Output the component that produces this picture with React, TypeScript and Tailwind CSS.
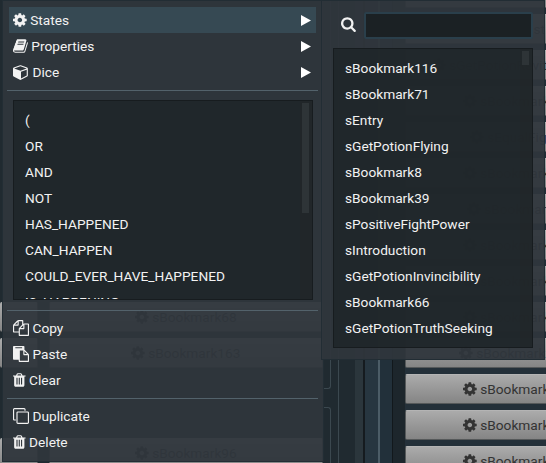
import type { ReactNode } from "react";

type IconName = "cog" | "book" | "cube" | "search" | "copy" | "paste" | "trash" | "clone";

const ICONS: Record<IconName, { x: number; w: number; d: string }> = {
  cog: {
    x: 128,
    w: 1536,
    d: "M1152 896q0-106-75-181t-181-75-181 75-75 181 75 181 181 75 181-75 75-181zm512-109v222q0 12-8 23t-20 13l-185 28q-19 54-39 91 35 50 107 138 10 12 10 25t-9 23q-27 37-99 108t-94 71q-12 0-26-9l-138-108q-44 23-91 38-16 136-29 186-7 28-36 28h-222q-14 0-24.5-8.5t-11.5-21.5l-28-184q-49-16-90-37l-141 107q-10 9-25 9-14 0-25-11-126-114-165-168-7-10-7-23 0-12 8-23 15-21 51-66.5t54-70.5q-27-50-41-99l-183-27q-13-2-21-12.5t-8-23.5v-222q0-12 8-23t19-13l186-28q14-46 39-92-40-57-107-138-10-12-10-24 0-10 9-23 26-36 98.5-107.5t94.5-71.5q13 0 26 10l138 107q44-23 91-38 16-136 29-186 7-28 36-28h222q14 0 24.5 8.5t11.5 21.5l28 184q49 16 90 37l142-107q9-9 24-9 13 0 25 10 129 119 165 170 7 8 7 22 0 12-8 23-15 21-51 66.5t-54 70.5q26 50 41 98l183 28q13 2 21 12.5t8 23.5z",
  },
  book: {
    x: 64,
    w: 1664,
    d: "M1703 478q40 57 18 129l-275 906q-19 64-76.5 107.5t-122.5 43.5h-923q-77 0-148.5-53.5t-99.5-131.5q-24-67-2-127 0-4 3-27t4-37q1-8-3-21.5t-3-19.5q2-11 8-21t16.5-23.5 16.5-23.5q23-38 45-91.5t30-91.5q3-10 .5-30t-.5-28q3-11 17-28t17-23q21-36 42-92t25-90q1-9-2.5-32t.5-28q4-13 22-30.5t22-22.5q19-26 42.5-84.5t27.5-96.5q1-8-3-25.5t-2-26.5q2-8 9-18t18-23 17-21q8-12 16.5-30.5t15-35 16-36 19.5-32 26.5-23.5 36-11.5 47.5 5.5l-1 3q38-9 51-9h761q74 0 114 56t18 130l-274 906q-36 119-71.5 153.5t-128.5 34.5h-869q-27 0-38 15-11 16-1 43 24 70 144 70h923q29 0 56-15.5t35-41.5l300-987q7-22 5-57 38 15 59 43zm-1064 2q-4 13 2 22.5t20 9.5h608q13 0 25.5-9.5t16.5-22.5l21-64q4-13-2-22.5t-20-9.5h-608q-13 0-25.5 9.5t-16.5 22.5zm-83 256q-4 13 2 22.5t20 9.5h608q13 0 25.5-9.5t16.5-22.5l21-64q4-13-2-22.5t-20-9.5h-608q-13 0-25.5 9.5t-16.5 22.5z",
  },
  cube: {
    x: 0,
    w: 1792,
    d: "M896 1629l640-349v-636l-640 233v752zm-64-865l698-254-698-254-698 254zm832-252v768q0 35-18 65t-49 47l-704 384q-28 16-61 16t-61-16l-704-384q-31-17-49-47t-18-65v-768q0-40 23-73t61-47l704-256q22-8 44-8t44 8l704 256q38 14 61 47t23 73z",
  },
  search: {
    x: 64,
    w: 1664,
    d: "M1216 832q0-185-131.5-316.5t-316.5-131.5-316.5 131.5-131.5 316.5 131.5 316.5 316.5 131.5 316.5-131.5 131.5-316.5zm512 832q0 52-38 90t-90 38q-54 0-90-38l-343-342q-179 124-399 124-143 0-273.5-55.5t-225-150-150-225-55.5-273.5 55.5-273.5 150-225 225-150 273.5-55.5 273.5 55.5 225 150 150 225 55.5 273.5q0 220-124 399l343 343q37 37 37 90z",
  },
  copy: {
    x: 0,
    w: 1792,
    d: "M1696 384q40 0 68 28t28 68v1216q0 40-28 68t-68 28h-960q-40 0-68-28t-28-68v-288h-544q-40 0-68-28t-28-68v-672q0-40 20-88t48-76l408-408q28-28 76-48t88-20h416q40 0 68 28t28 68v328q68-40 128-40h416zm-544 213l-299 299h299v-299zm-640-384l-299 299h299v-299zm196 647l316-316v-416h-384v416q0 40-28 68t-68 28h-416v640h512v-256q0-40 20-88t48-76zm956 804v-1152h-384v416q0 40-28 68t-68 28h-416v640h896z",
  },
  paste: {
    x: 0,
    w: 1792,
    d: "M768 1664h896v-640h-416q-40 0-68-28t-28-68v-416h-384v1152zm256-1440v-64q0-13-9.5-22.5t-22.5-9.5h-704q-13 0-22.5 9.5t-9.5 22.5v64q0 13 9.5 22.5t22.5 9.5h704q13 0 22.5-9.5t9.5-22.5zm256 672h299l-299-299v299zm512 128v672q0 40-28 68t-68 28h-960q-40 0-68-28t-28-68v-160h-544q-40 0-68-28t-28-68v-1344q0-40 28-68t68-28h1088q40 0 68 28t28 68v328q21 13 36 28l408 408q28 28 48 76t20 88z",
  },
  trash: {
    x: 192,
    w: 1408,
    d: "M704 1376v-704q0-14-9-23t-23-9h-64q-14 0-23 9t-9 23v704q0 14 9 23t23 9h64q14 0 23-9t9-23zm256 0v-704q0-14-9-23t-23-9h-64q-14 0-23 9t-9 23v704q0 14 9 23t23 9h64q14 0 23-9t9-23zm256 0v-704q0-14-9-23t-23-9h-64q-14 0-23 9t-9 23v704q0 14 9 23t23 9h64q14 0 23-9t9-23zm-544-992h448l-48-117q-7-9-17-11h-317q-10 2-17 11zm928 32v64q0 14-9 23t-23 9h-96v948q0 83-47 143.5t-113 60.5h-832q-66 0-113-58.5t-47-141.5v-952h-96q-14 0-23-9t-9-23v-64q0-14 9-23t23-9h309l70-167q15-37 54-63t79-26h320q40 0 79 26t54 63l70 167h309q14 0 23 9t9 23z",
  },
  clone: {
    x: 0,
    w: 1792,
    d: "M1664 1632v-1088q0-13-9.5-22.5t-22.5-9.5h-1088q-13 0-22.5 9.5t-9.5 22.5v1088q0 13 9.5 22.5t22.5 9.5h1088q13 0 22.5-9.5t9.5-22.5zm128-1088v1088q0 66-47 113t-113 47h-1088q-66 0-113-47t-47-113v-1088q0-66 47-113t113-47h1088q66 0 113 47t47 113zm-384-384v160h-128v-160q0-13-9.5-22.5t-22.5-9.5h-1088q-13 0-22.5 9.5t-9.5 22.5v1088q0 13 9.5 22.5t22.5 9.5h160v128h-160q-66 0-113-47t-47-113v-1088q0-66 47-113t113-47h1088q66 0 113 47t47 113z",
  },
};

function Icon({ name, className = "h-4" }: { name: IconName; className?: string }) {
  const { x, w, d } = ICONS[name];
  return (
    <svg viewBox={`${x} 0 ${w} 1792`} className={`${className} w-auto shrink-0 fill-current`}>
      <path d={d} />
    </svg>
  );
}

function MenuItem({ icon, label, active, arrow }: { icon: IconName; label: string; active?: boolean; arrow?: boolean }) {
  return (
    <div className={`ml-1.5 mr-[7px] flex h-[26px] items-center pl-1 pr-[5px] ${active ? "bg-[#364953]" : ""}`}>
      <Icon name={icon} />
      <span className="ml-[3.5px] grow">{label}</span>
      {arrow && (
        <svg viewBox="0 0 10 11" className="h-[11px] w-2.5 fill-white">
          <path d="M0 0L10 5.5L0 11z" />
        </svg>
      )}
    </div>
  );
}

function Divider({ className }: { className: string }) {
  return (
    <div className={`pl-1 pr-[5px] ${className}`}>
      <div className="h-px bg-[#53626b]" />
    </div>
  );
}

function ScrollList({ items, className, thumb }: { items: string[]; className: string; thumb: string }) {
  return (
    <div className={`flex overflow-hidden border border-[#171c1f] bg-[#1f2629]/88 ${className}`}>
      <ul className="grow pl-[11px] pt-1.5">
        {items.map((item) => (
          <li key={item} className="h-[26px] leading-[26px]">
            {item}
          </li>
        ))}
      </ul>
      <div className="w-3 bg-[#222629]/70 pl-[2px] pt-[2px]">
        <div className={`w-[7px] bg-[#2e3437] ${thumb}`} />
      </div>
    </div>
  );
}

function StateButton({ className = "", children }: { className?: string; children?: ReactNode }) {
  return (
    <div
      className={`flex h-[30px] shrink-0 items-center overflow-hidden whitespace-nowrap rounded-[2px] border border-[#56595a] border-t-[#b4b4b4] bg-linear-to-b from-[#ababab] to-[#858585] text-[#333] ${className}`}
    >
      {children !== undefined && (
        <>
          <Icon name="cog" />
          <span className="ml-[3.5px]">{children}</span>
        </>
      )}
    </div>
  );
}

const OPERATORS = ["(", "OR", "AND", "NOT", "HAS_HAPPENED", "CAN_HAPPEN", "COULD_EVER_HAVE_HAPPENED", "IS_HAPPENING"];

const STATES = [
  "sBookmark116",
  "sBookmark71",
  "sEntry",
  "sGetPotionFlying",
  "sBookmark8",
  "sBookmark39",
  "sPositiveFightPower",
  "sIntroduction",
  "sGetPotionInvincibility",
  "sBookmark66",
  "sGetPotionTruthSeeking",
];

const COLUMN: [string, string][] = [
  ["", "pl-8"],
  ["sGetPotionDust", "pl-[26px]"],
  ["sGetPotionRevitalise", "pl-[26px]"],
  ["sBookmark113", "pl-[57px]"],
  ["sEqualFight", "pl-16"],
  ["sBookmark125", "pl-[57px]"],
  ["sBookmark84", "pl-[61px]"],
  ["sBookmark121", "pl-[57px]"],
  ["sBookmark140", "pl-[57px]"],
  ["sBookmark107", "pl-[57px]"],
  ["sBookmark1000", "pl-[53px]"],
  ["sBookmark102", "pl-[57px]"],
  ["sBookmark133", "pl-[57px]"],
  ["sBookmark117", "pl-[57px]"],
];

function Backdrop() {
  return (
    <div className="flex h-full w-full bg-[#202a30]">
      <div className="flex w-[323px] shrink-0 flex-col pt-[302px]">
        <div className="flex gap-[11px]">
          <StateButton className="w-[38px] border-l-0" />
          <StateButton className="grow pl-[85px]">sBookmark68</StateButton>
        </div>
        <div className="mt-1.5 flex gap-[11px]">
          <StateButton className="w-[38px] border-l-0" />
          <StateButton className="grow pl-[81px]">sBookmark163</StateButton>
        </div>
        <div className="mt-[70px] flex gap-[11px]">
          <StateButton className="w-[38px] border-l-0" />
          <StateButton className="grow pl-[85px]">sBookmark96</StateButton>
        </div>
      </div>
      <div className="flex w-[15px] shrink-0 flex-col pr-[7px]">
        <div className="h-[389px] rounded-br-[3px] border-b border-r border-[#3b484f]" />
        <div className="mt-[18px] grow rounded-tr-[3px] border-r border-t border-[#3b484f]" />
      </div>
      <div className="w-[17px] shrink-0 border-l border-[#3b484f] bg-[#202a30]" />
      <div className="w-2 shrink-0 bg-[#2b363c]" />
      <div className="w-[15px] shrink-0 border-l-2 border-[#151b1f] bg-[#273640]" />
      <div className="w-[2px] shrink-0 bg-[#4c5d67]" />
      <div className="w-3 shrink-0 bg-[#22303a]" />
      <div className="w-[13px] shrink-0 border-l border-[#12181c] bg-[#1d262c]" />
      <div className="-mt-[22px] flex grow flex-col gap-1.5 overflow-hidden bg-[#243039]">
        {COLUMN.map(([label, pad], i) => (
          <StateButton key={i} className={`w-[180px] ${pad}`}>
            {label}
          </StateButton>
        ))}
      </div>
    </div>
  );
}

export default function App() {
  return (
    <div className="relative h-[463px] w-[546px] overflow-hidden bg-[#202a30] font-['Roboto',sans-serif] text-[13.7px] leading-5 text-[#f2f2f2]">
      <Backdrop />

      <div className="absolute left-[2px] top-0 h-[462px] w-[322px] border border-[#222d34] bg-[#2f363c]/95 pt-1.5">
        <MenuItem icon="cog" label="States" active arrow />
        <MenuItem icon="book" label="Properties" arrow />
        <MenuItem icon="cube" label="Dice" arrow />
        <Divider className="pt-[5px]" />
        <ScrollList items={OPERATORS} className="ml-2.5 mt-[9px] h-[200px] w-[300px]" thumb="h-[110px]" />
        <Divider className="pb-1 pt-2.5" />
        <MenuItem icon="copy" label="Copy" />
        <MenuItem icon="paste" label="Paste" />
        <MenuItem icon="trash" label="Clear" />
        <Divider className="pb-1 pt-[5px]" />
        <MenuItem icon="clone" label="Duplicate" />
        <MenuItem icon="trash" label="Delete" />
      </div>

      <div className="absolute left-[321px] top-0 h-[360px] w-[224px] border border-[#222d34] bg-[#2f363c]/95 px-[11px] pt-[11px]">
        <div className="flex items-start">
          <Icon name="search" className="ml-2 mt-1 h-4" />
          <input className="ml-2 h-[27px] w-[169px] rounded-[2px] border-2 border-[#2a3f4b] bg-[#1b2124] outline-none" />
        </div>
        <ScrollList items={STATES} className="mt-[9px] h-[300px] w-[200px]" thumb="h-[14px]" />
      </div>
    </div>
  );
}
